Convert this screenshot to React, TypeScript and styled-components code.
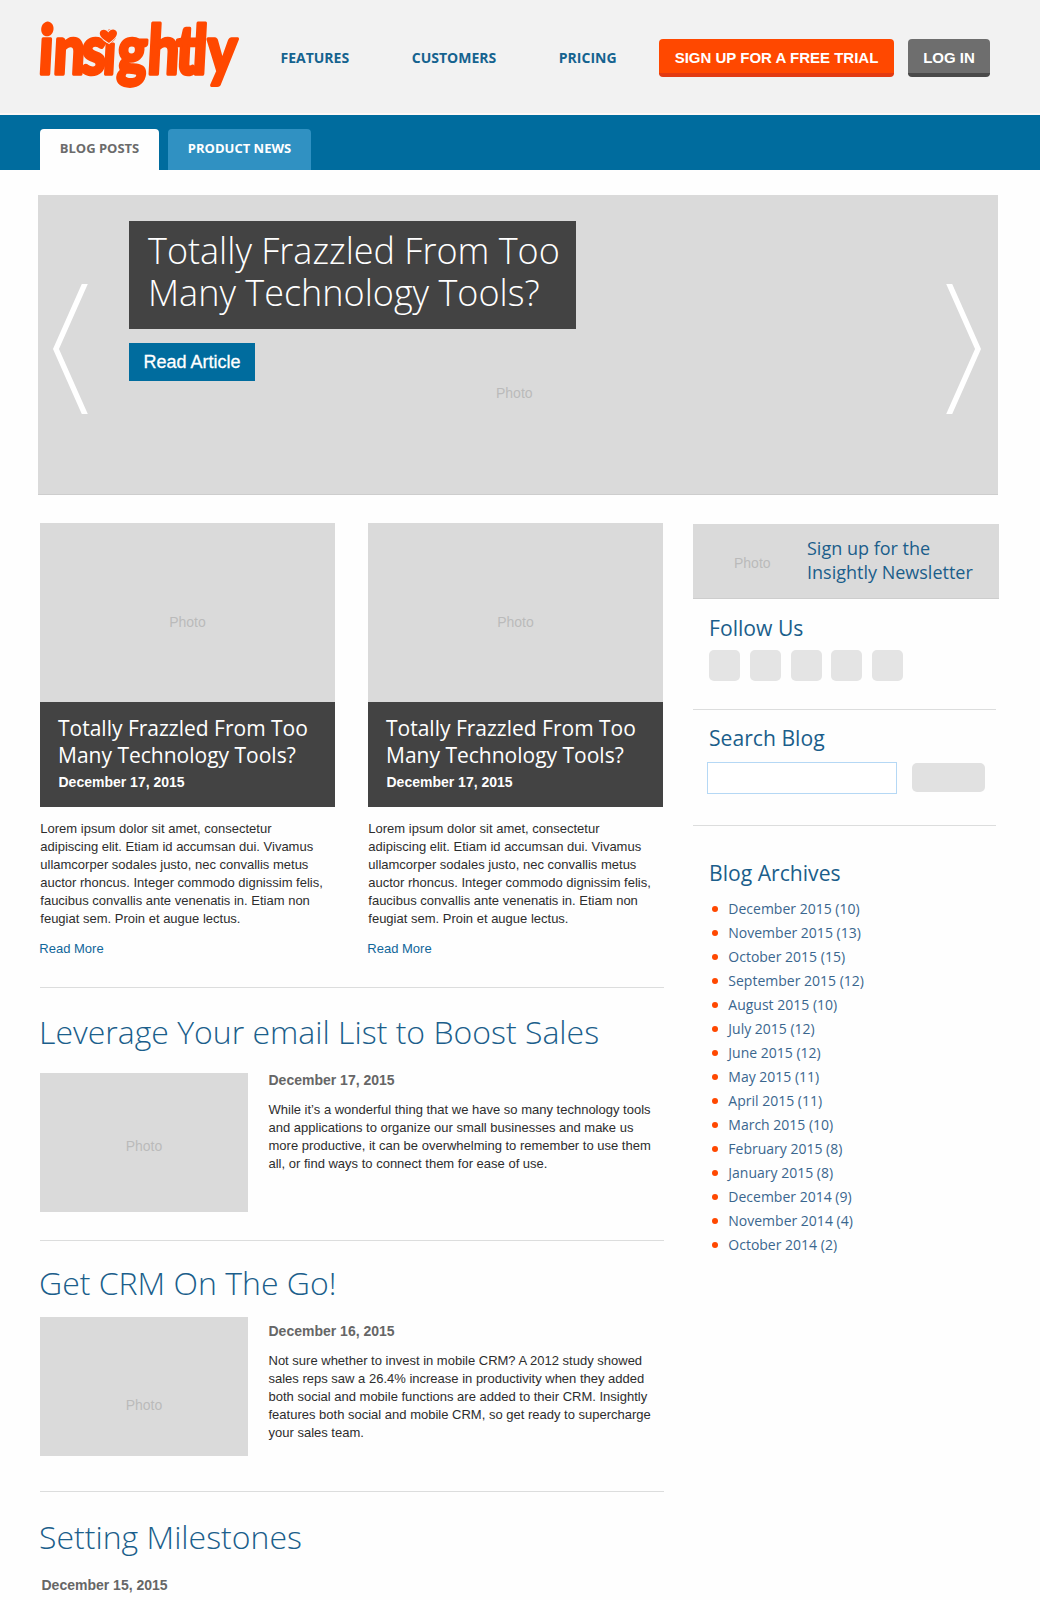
import React from "react";
import styled, { createGlobalStyle } from "styled-components";

const sans = `"Liberation Sans", Arial, Helvetica, sans-serif`;
const display = `"Open Sans", "Noto Sans", sans-serif`;
const color = {
  orange: "#ff4800",
  blue: "#006c9e",
  heading: "#1b5e8b",
  photo: "#dadada",
  dark: "#434343",
  rule: "#dcdddd",
};

const GlobalStyle = createGlobalStyle`
  * { box-sizing: border-box; margin: 0; padding: 0; }
  body { background: #fefefe; font-family: ${sans}; color: #2d2d2d; }
  a { color: inherit; text-decoration: none; }
  ul { list-style: none; }
`;

const Page = styled.div`
  width: 1040px;
  height: 1600px;
  overflow: hidden;
`;

const Header = styled.header`
  display: flex;
  align-items: center;
  height: 115px;
  padding: 3px 50px 0 37px;
  background: #f2f2f2;
  border-bottom: 2px solid #fdf8f6;
`;

const LogoSvg = styled.svg`
  display: block;
  width: 206px;
  height: 80px;
  overflow: visible;
`;

const LogoText = styled.text`
  font-family: Lato, sans-serif;
  font-weight: 900;
  font-size: 68px;
  fill: ${color.orange};
  stroke: ${color.orange};
  stroke-width: 3.4px;
  stroke-linejoin: round;
`;

const LogoHeartStem = styled.tspan`
  font-size: 58px;
`;

const Nav = styled.nav`
  display: flex;
  gap: 62.6px;
  width: 378.5px;
  margin-left: 37.5px;
  font: 700 14px/20px ${display};
  color: #15638f;
`;

const HeaderButton = styled.a<{ $tone: "orange" | "gray" }>`
  width: ${(p) => (p.$tone === "orange" ? 235 : 82)}px;
  height: 38px;
  margin-right: ${(p) => (p.$tone === "orange" ? 14 : 0)}px;
  border-radius: 4px;
  border-bottom: 4px solid ${(p) => (p.$tone === "orange" ? "#e23a12" : "#4a4a4a")};
  background: ${(p) => (p.$tone === "orange" ? color.orange : "#6e6e6e")};
  color: #fff;
  font: 700 15px/38px ${sans};
  text-align: center;
  white-space: nowrap;
`;

const TabBar = styled.div`
  display: flex;
  gap: 9px;
  height: 55px;
  padding: 14px 40px 0;
  background: ${color.blue};
`;

const Tab = styled.a<{ $active?: boolean }>`
  width: ${(p) => (p.$active ? 119 : 143)}px;
  border-radius: 4px 4px 0 0;
  background: ${(p) => (p.$active ? "#fefefe" : "#3091c2")};
  color: ${(p) => (p.$active ? "#6b6b6b" : "#fff")};
  font: 700 13px/38px ${display};
  text-align: center;
`;

const Hero = styled.section`
  position: relative;
  display: flex;
  width: 960px;
  height: 300px;
  margin: 25px 0 0 38px;
  padding: 0 16px 0 14px;
  background: ${color.photo};
  border-bottom: 1px solid #cdcdcd;
`;

const ChevronSvg = styled.svg<{ $flip?: boolean }>`
  width: 36px;
  height: 130px;
  margin-top: 89px;
  transform: ${(p) => (p.$flip ? "scaleX(-1)" : "none")};
`;

const HeroCaption = styled.div`
  flex: 1;
  display: flex;
  flex-direction: column;
  align-items: flex-start;
  padding: 26px 0 0 41px;
`;

const HeroTitle = styled.h1`
  width: 447px;
  height: 108px;
  padding: 9px 0 0 19px;
  background: ${color.dark};
  color: #fff;
  font: 300 36px/42px ${display};
`;

const HeroLink = styled.a`
  width: 126px;
  height: 38px;
  margin-top: 14px;
  background: ${color.blue};
  color: #fff;
  font: 400 18px/38px ${sans};
  -webkit-text-stroke: 0.3px #fff;
  text-align: center;
`;

const PhotoLabel = styled.span`
  color: #bababa;
  font: 400 14px/16px ${sans};
`;

const HeroPhotoLabel = styled(PhotoLabel)`
  position: absolute;
  left: 458px;
  top: 190px;
`;

const Columns = styled.div`
  display: grid;
  grid-template-columns: 624px 306px;
  column-gap: 29px;
  padding: 28px 0 0 40px;
`;

const Rule = styled.hr`
  border: 0;
  height: 1px;
  background: ${color.rule};
`;

const Cards = styled.div`
  display: grid;
  grid-template-columns: 295px 295px;
  column-gap: 33px;
  margin-bottom: 29px;
`;

const Photo = styled.div<{ $w: number; $h: number; $drop: number; $top?: number }>`
  display: flex;
  flex: none;
  align-items: center;
  justify-content: center;
  width: ${(p) => p.$w}px;
  height: ${(p) => p.$h}px;
  margin-top: ${(p) => p.$top ?? 0}px;
  padding-top: ${(p) => p.$drop}px;
  background: ${color.photo};
`;

const CardCaption = styled.div`
  height: 105px;
  padding: 13px 0 0 18px;
  background: ${color.dark};
  color: #fff;
`;

const CardTitle = styled.h2`
  font: 400 21px/27px ${display};
`;

const CardDate = styled.p`
  margin: 3px 0 0 0.5px;
  font: 700 14px/20px ${sans};
`;

const CardText = styled.p`
  margin: 13px 0 0 0.3px;
  font: 400 13px/18px ${sans};
  white-space: pre-line;
`;

const ReadMore = styled.a`
  display: block;
  margin: 12px 0 0 -0.7px;
  color: #11669a;
  font: 400 13px/18px ${sans};
`;

const ArticleTitle = styled.h2<{ $top: number }>`
  margin: ${(p) => p.$top}px 0 0 -1px;
  color: ${color.heading};
  font: 300 32px/44px ${display};
`;

const ArticleRow = styled.div<{ $top: number; $bottom: number }>`
  display: flex;
  align-items: flex-start;
  gap: 20px;
  margin: ${(p) => p.$top}px 0 ${(p) => p.$bottom}px;
`;

const ArticleBody = styled.div<{ $top: number }>`
  padding: ${(p) => p.$top}px 0 0 0.5px;
`;

const ArticleDate = styled.p<{ $indent?: boolean }>`
  margin: ${(p) => (p.$indent ? "16px 0 0 1.5px" : "0")};
  color: #666;
  font: 700 14px/20px ${sans};
`;

const ArticleText = styled.p`
  margin: 11px 0 0;
  font: 400 13px/18px ${sans};
  white-space: pre-line;
`;

const Sidebar = styled.aside`
  padding-top: 1px;
  color: ${color.heading};
`;

const Newsletter = styled.div`
  display: flex;
  height: 75px;
  padding: 12px 0 0 41px;
  background: ${color.photo};
  border-bottom: 1px solid #cdcdcd;
  font: 400 18px/24px ${display};
  white-space: pre-line;
`;

const NewsletterPhoto = styled(PhotoLabel)`
  width: 73px;
  padding-top: 19px;
`;

const SideRule = styled(Rule)<{ $top: number }>`
  width: 303px;
  margin: ${(p) => p.$top}px 0 0;
`;

const SideTitle = styled.h3<{ $top: number }>`
  margin: ${(p) => p.$top}px 0 0 16px;
  font: 400 21.15px/28px ${display};
`;

const Socials = styled.div`
  display: flex;
  gap: 9.75px;
  margin: 8px 0 0 16px;
`;

const Social = styled.a`
  width: 31px;
  height: 31px;
  border-radius: 5px;
  background: #e4e4e4;
`;

const SearchRow = styled.form`
  display: flex;
  align-items: flex-start;
  gap: 15px;
  margin: 10px 0 0 14px;
`;

const SearchInput = styled.input`
  width: 190px;
  height: 32px;
  border: 1px solid #b5d8f5;
  background: #fff;
`;

const SearchButton = styled.button`
  width: 73px;
  height: 29px;
  margin-top: 1px;
  border: 0;
  border-radius: 5px;
  background: #e1e1e1;
`;

const Archives = styled.ul`
  margin: 10px 0 0 19px;
`;

const ArchiveItem = styled.li`
  display: flex;
  align-items: center;
  gap: 10.3px;
  height: 24px;
  color: #3a668e;
  font: 400 14px/24px ${display};

  &::before {
    content: "";
    width: 6px;
    height: 6px;
    margin-bottom: 1px;
    border-radius: 50%;
    background: ${color.orange};
  }
`;

const lorem = `Lorem ipsum dolor sit amet, consectetur
adipiscing elit. Etiam id accumsan dui. Vivamus
ullamcorper sodales justo, nec convallis metus
auctor rhoncus. Integer commodo dignissim felis,
faucibus convallis ante venenatis in. Etiam non
feugiat sem. Proin et augue lectus.`;

const emailText = `While it’s a wonderful thing that we have so many technology tools
and applications to organize our small businesses and make us
more productive, it can be overwhelming to remember to use them
all, or find ways to connect them for ease of use.`;

const crmText = `Not sure whether to invest in mobile CRM? A 2012 study showed
sales reps saw a 26.4% increase in productivity when they added
both social and mobile functions are added to their CRM. Insightly
features both social and mobile CRM, so get ready to supercharge
your sales team.`;

const archives = [
  "December 2015 (10)", "November 2015 (13)", "October 2015 (15)",
  "September 2015 (12)", "August 2015 (10)", "July 2015 (12)",
  "June 2015 (12)", "May 2015 (11)", "April 2015 (11)", "March 2015 (10)",
  "February 2015 (8)", "January 2015 (8)", "December 2014 (9)",
  "November 2014 (4)", "October 2014 (2)",
];

const Logo = () => (
  <LogoSvg viewBox="0 0 206 80" role="img" aria-label="insightly">
    <LogoText transform="translate(0 56) skewX(-3) scale(0.82 1)" x="1 19 53 80 97 134 168 189 206">
      ins<LogoHeartStem>i</LogoHeartStem>ghtly
    </LogoText>
    <path
      d="M72 25C67 22 61.500 18 63 14C64.500 10.700 69.500 11 71.200 14.500C73.500 10.500 78.500 10.500 79.800 14C81 18 76 22 72 25Z"
      fill={color.orange}
      stroke="#f2f2f2"
      strokeWidth="2"
      paintOrder="stroke"
    />
  </LogoSvg>
);

const Chevron = ({ flip }: { flip?: boolean }) => (
  <ChevronSvg $flip={flip} viewBox="0 0 36 130">
    <polyline points="35,-5 4,65 35,135" fill="none" stroke="#fff" strokeWidth="5.500" />
  </ChevronSvg>
);

const Card = () => (
  <article>
    <Photo $w={295} $h={179} $drop={18}><PhotoLabel>Photo</PhotoLabel></Photo>
    <CardCaption>
      <CardTitle>Totally Frazzled From Too<br />Many Technology Tools?</CardTitle>
      <CardDate>December 17, 2015</CardDate>
    </CardCaption>
    <CardText>{lorem}</CardText>
    <ReadMore href="#">Read More</ReadMore>
  </article>
);

export default function App() {
  return (
    <Page>
      <GlobalStyle />
      <Header>
        <Logo />
        <Nav>
          <a href="#">FEATURES</a>
          <a href="#">CUSTOMERS</a>
          <a href="#">PRICING</a>
        </Nav>
        <HeaderButton $tone="orange" href="#">SIGN UP FOR A FREE TRIAL</HeaderButton>
        <HeaderButton $tone="gray" href="#">LOG IN</HeaderButton>
      </Header>
      <TabBar>
        <Tab $active href="#">BLOG POSTS</Tab>
        <Tab href="#">PRODUCT NEWS</Tab>
      </TabBar>
      <Hero>
        <Chevron />
        <HeroCaption>
          <HeroTitle>Totally Frazzled From Too<br />Many Technology Tools?</HeroTitle>
          <HeroLink href="#">Read Article</HeroLink>
        </HeroCaption>
        <Chevron flip />
        <HeroPhotoLabel>Photo</HeroPhotoLabel>
      </Hero>
      <Columns>
        <main>
          <Cards>
            <Card />
            <Card />
          </Cards>
          <Rule />
          <ArticleTitle $top={22}>Leverage Your email List to Boost Sales</ArticleTitle>
          <ArticleRow $top={16} $bottom={28}>
            <Photo $w={208} $h={139} $drop={7} $top={3}><PhotoLabel>Photo</PhotoLabel></Photo>
            <ArticleBody $top={0}>
              <ArticleDate>December 17, 2015</ArticleDate>
              <ArticleText>{emailText}</ArticleText>
            </ArticleBody>
          </ArticleRow>
          <Rule />
          <ArticleTitle $top={20}>Get CRM On The Go!</ArticleTitle>
          <ArticleRow $top={12} $bottom={35}>
            <Photo $w={208} $h={139} $drop={36}><PhotoLabel>Photo</PhotoLabel></Photo>
            <ArticleBody $top={4}>
              <ArticleDate>December 16, 2015</ArticleDate>
              <ArticleText>{crmText}</ArticleText>
            </ArticleBody>
          </ArticleRow>
          <Rule />
          <ArticleTitle $top={23}>Setting Milestones</ArticleTitle>
          <ArticleDate $indent>December 15, 2015</ArticleDate>
        </main>
        <Sidebar>
          <Newsletter>
            <NewsletterPhoto>Photo</NewsletterPhoto>
            <p>{"Sign up for the\nInsightly Newsletter"}</p>
          </Newsletter>
          <SideTitle $top={15}>Follow Us</SideTitle>
          <Socials>
            {[0, 1, 2, 3, 4].map((n) => <Social key={n} href="#" />)}
          </Socials>
          <SideRule $top={28} />
          <SideTitle $top={14}>Search Blog</SideTitle>
          <SearchRow>
            <SearchInput type="text" />
            <SearchButton type="button" />
          </SearchRow>
          <SideRule $top={31} />
          <SideTitle $top={33}>Blog Archives</SideTitle>
          <Archives>
            {archives.map((a) => <ArchiveItem key={a}>{a}</ArchiveItem>)}
          </Archives>
        </Sidebar>
      </Columns>
    </Page>
  );
}
